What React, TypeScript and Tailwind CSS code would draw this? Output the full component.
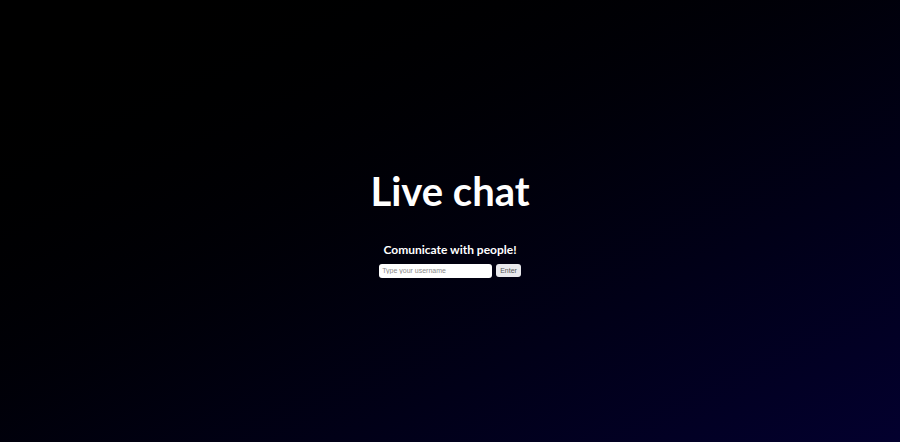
export default function App() {
  return (
    <div className="flex h-[442px] w-full flex-col items-center justify-center bg-gradient-to-br from-[#000000] to-[#03002e] font-['Lato',sans-serif] text-white">
      <h1 className="mt-[6px] text-[40px] font-bold leading-none">Live chat</h1>
      <h3 className="mt-[33px] text-[12px] font-bold leading-none">Comunicate with people!</h3>
      <form className="mt-[8px] flex items-center gap-[4px]">
        <input
          type="text"
          placeholder="Type your username"
          className="h-[14px] w-[113px] rounded-[3px] bg-white px-[3px] font-['Liberation_Sans',sans-serif] text-[7px] text-black placeholder:text-[#8a8a8a] outline-none"
        />
        <button
          type="button"
          className="h-[13px] rounded-[3px] bg-[#e9e9ed] px-[4px] font-['Liberation_Sans',sans-serif] text-[7px] leading-none text-[#555]"
        >
          Enter
        </button>
      </form>
    </div>
  );
}
